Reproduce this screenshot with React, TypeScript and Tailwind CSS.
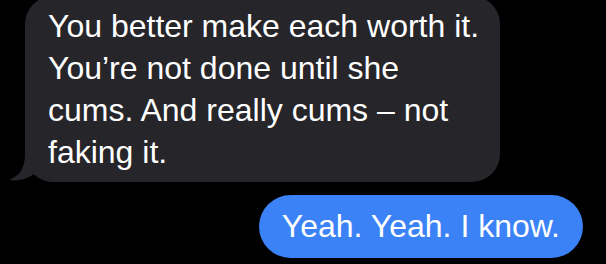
export default function App() {
  return (
    <div
      className="w-full h-[264px] bg-black overflow-hidden flex flex-col text-white"
      style={{ fontFamily: '"Liberation Sans", Arial, sans-serif' }}
    >
      {/* incoming */}
      <div className="relative ml-[25px] -mt-[4px] w-[475px] rounded-[28px] bg-[#262529] px-[23px] pt-[9px] pb-[9px] text-[32px] leading-[42px] whitespace-nowrap">
        <svg
          className="absolute bottom-0 -left-[16px]"
          width="44"
          height="40"
          viewBox="0 0 44 40"
        >
          <path
            d="M16 0 L16 12 C16 27 10 34 0 38 C9 39.5 18 37 25 32 C30 36 36 40 44 40 L44 0 Z"
            fill="#262529"
          />
        </svg>
        <p className="relative">
          You better make each worth it.
          <br />
          You’re not done until she
          <br />
          cums. And really cums – not
          <br />
          faking it.
        </p>
      </div>

      {/* outgoing */}
      <div className="self-end mr-[23px] mt-[13px] rounded-full bg-[#3b82f6] px-[23px] pt-[10px] pb-[11px] text-[32px] leading-[42px] whitespace-nowrap">
        Yeah. Yeah. I know.
      </div>
    </div>
  );
}
